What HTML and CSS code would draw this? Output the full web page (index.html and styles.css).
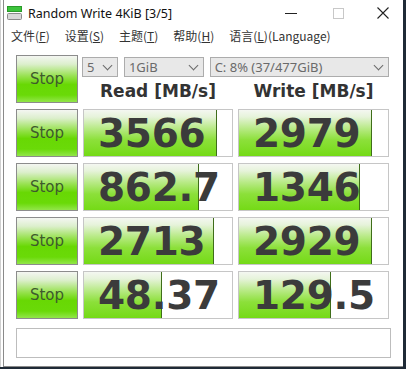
FILE: index.html
```html
<!DOCTYPE html>
<html lang="zh-CN">

<head>
    <meta charset="UTF-8">
    <title>Random Write 4KiB [3/5]</title>
    <link rel="stylesheet" href="styles.css">
</head>

<body>
    <div class="janela">
        <div class="titulo">
            <svg class="icone" width="15" height="14" viewBox="0 0 15 14">
                <rect x="0.5" y="0.5" width="14" height="5" fill="#3cc43c" stroke="#2a9a2a" />
                <rect x="0.5" y="7.5" width="14" height="6" rx="1" fill="#d8d8d8" stroke="#8a8a8a" />
            </svg>
            <span class="titulo-texto">Random Write 4KiB [3/5]</span>
            <div class="controles">
                <span class="ctl min"></span>
                <span class="ctl max"></span>
                <svg class="ctl fechar" width="12" height="12" viewBox="0 0 12 12">
                    <path d="M0.5 0.5 L11.5 11.5 M11.5 0.5 L0.5 11.5" stroke="#222" stroke-width="1.1" />
                </svg>
            </div>
        </div>

        <div class="menu">
            <span>文件(<u>F</u>)</span>
            <span>设置(<u>S</u>)</span>
            <span>主题(<u>T</u>)</span>
            <span>帮助(<u>H</u>)</span>
            <span>语言(<u>L</u>)(Language)</span>
        </div>

        <div class="conteudo">
            <div class="grade">
                <button class="stop">Stop</button>
                <div class="topo">
                    <div class="selecoes">
                        <div class="select s-count">5</div>
                        <div class="select s-size">1GiB</div>
                        <div class="select s-drive">C: 8% (37/477GiB)</div>
                    </div>
                    <div class="cabecalhos">
                        <div class="cab">Read [MB/s]</div>
                        <div class="cab">Write [MB/s]</div>
                    </div>
                </div>

                <button class="stop">Stop</button>
                <div class="celula"><div class="barra" style="width: 90%"></div><span class="valor">3566</span></div>
                <div class="celula"><div class="barra" style="width: 89.5%"></div><span class="valor">2979</span></div>

                <button class="stop">Stop</button>
                <div class="celula"><div class="barra" style="width: 78%"></div><span class="valor">862.7</span></div>
                <div class="celula"><div class="barra" style="width: 81.5%"></div><span class="valor">1346</span></div>

                <button class="stop">Stop</button>
                <div class="celula"><div class="barra" style="width: 88%"></div><span class="valor">2713</span></div>
                <div class="celula"><div class="barra" style="width: 89.5%"></div><span class="valor">2929</span></div>

                <button class="stop">Stop</button>
                <div class="celula"><div class="barra" style="width: 53%"></div><span class="valor">48.37</span></div>
                <div class="celula"><div class="barra" style="width: 62%"></div><span class="valor">129.5</span></div>
            </div>

            <div class="comentario"></div>
        </div>
    </div>
</body>

</html>
```

FILE: styles.css
```css
* {
    box-sizing: border-box;
}

body {
    margin: 0;
    background-color: #1f2a36;
    font-family: "Noto Sans", "Noto Sans CJK SC", sans-serif;
    color: #222;
}

.janela {
    width: 403px;
    height: 367px;
    background-color: #ffffff;
    border-left: 1px solid #d0d0d0;
    box-shadow: inset 2px 0 0 #ffffff, inset 3px 0 0 #8a8a8a, inset 0 -1px 0 #8a8a8a;
    padding-left: 2px;
}

/* barra de titulo */
.titulo {
    height: 26px;
    display: flex;
    align-items: center;
    padding-left: 4px;
}

.icone {
    margin-right: 6px;
}

.titulo-texto {
    font-size: 12.5px;
    color: #111;
}

.controles {
    margin-left: auto;
    display: flex;
    align-items: center;
    height: 26px;
}

.ctl {
    display: block;
}

.min {
    width: 12px;
    height: 1px;
    background-color: #222;
    margin-right: 36px;
}

.max {
    width: 11px;
    height: 11px;
    border: 1px solid #c8c8c8;
    margin-right: 33px;
}

.fechar {
    margin-right: 14px;
}

/* menu */
.menu {
    height: 19px;
    display: flex;
    align-items: center;
    gap: 15px;
    padding-left: 8px;
    font-size: 12px;
    color: #333;
    font-family: "Noto Sans CJK SC", sans-serif;
}

.menu u {
    text-decoration-thickness: 1px;
    text-underline-offset: 1px;
}

/* area principal */
.conteudo {
    padding: 10px 0 0 13px;
}

.grade {
    display: grid;
    grid-template-columns: 62px 150px 151px;
    grid-auto-rows: 48px;
    column-gap: 5px;
    row-gap: 6px;
}

.topo {
    grid-column: 2 / 4;
    display: flex;
    flex-direction: column;
}

.selecoes {
    display: flex;
    gap: 6px;
    margin-top: 2px;
    margin-left: -1px;
}

.select {
    height: 20px;
    border: 1px solid #acacac;
    background-color: #e8e8e8;
    color: #6a6a6a;
    font-size: 13px;
    line-height: 18px;
    padding-left: 4px;
    position: relative;
}

.select::after {
    content: "";
    position: absolute;
    right: 6px;
    top: 4px;
    width: 6px;
    height: 6px;
    border-right: 1.3px solid #6a6a6a;
    border-bottom: 1.3px solid #6a6a6a;
    transform: rotate(45deg);
}

.s-count {
    width: 36px;
}

.s-size {
    width: 80px;
}

.s-drive {
    width: 180px;
}

.cabecalhos {
    display: grid;
    grid-template-columns: 150px 151px;
    column-gap: 5px;
    flex: 1;
    align-items: center;
}

.cab {
    text-align: center;
    font-family: "DejaVu Sans", sans-serif;
    font-weight: bold;
    font-size: 17px;
    color: #333;
    padding-top: 2px;
}

.stop {
    border: 1px solid #8c8c8c;
    background: linear-gradient(to bottom, #f4f6f2 0%, #dcefcc 18%, #94e14a 45%, #68d804 62%, #6ada08 85%, #92e64a 100%);
    font-family: "DejaVu Sans", sans-serif;
    font-size: 15px;
    color: #3d5a2c;
    padding: 0;
    margin: 0;
}

.celula {
    position: relative;
    border: 1px solid #c6c6c6;
    background-color: #ffffff;
    display: flex;
    align-items: center;
    padding-left: 14px;
}

.barra {
    position: absolute;
    left: 0;
    top: 0;
    bottom: 0;
    background: linear-gradient(to bottom, #f4f7f1 0%, #e6f3da 15%, #b8ea86 40%, #8ce03a 65%, #74da16 100%);
    border-right: 1px solid #3f6e1a;
}

.valor {
    position: relative;
    font-family: "DejaVu Sans", sans-serif;
    font-weight: bold;
    font-size: 39px;
    color: #3b3b3b;
    letter-spacing: -0.3px;
}

.comentario {
    margin-top: 9px;
    width: 375px;
    height: 30px;
    border: 1px solid #bdbdbd;
    background-color: #ffffff;
}
```
